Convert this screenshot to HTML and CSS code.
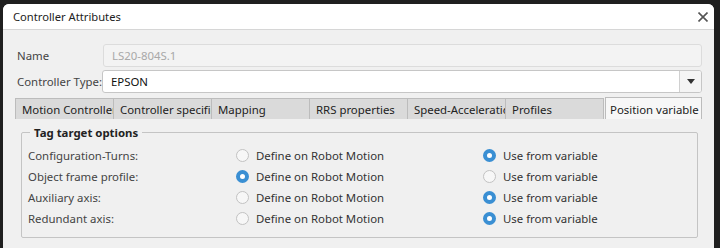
FILE: index.html
```html
<!DOCTYPE html>
<html lang="en">
<head>
  <meta charset="UTF-8">
  <title>Controller Attributes</title>
  <link rel="stylesheet" href="styles.css">
</head>
<body>
  <div class="dialog">
    <div class="titlebar">
      <span class="title">Controller Attributes</span>
      <svg class="close" width="10" height="10" viewBox="0 0 10 10">
        <path d="M0.5 0.5 L9.5 9.5 M9.5 0.5 L0.5 9.5" stroke="#555" stroke-width="1.6"/>
      </svg>
    </div>

    <div class="content">
      <div class="form-row">
        <label class="field-label">Name</label>
        <div class="input disabled">LS20-804S.1</div>
      </div>
      <div class="form-row">
        <label class="field-label">Controller Type:</label>
        <div class="input select">
          <span class="select-value">EPSON</span>
          <span class="select-btn">
            <svg width="8" height="5" viewBox="0 0 8 5"><path d="M0 0 H8 L4 5 Z" fill="#333"/></svg>
          </span>
        </div>
      </div>

      <div class="tabs">
        <div class="tab">Motion Controller</div>
        <div class="tab">Controller specific</div>
        <div class="tab">Mapping</div>
        <div class="tab">RRS properties</div>
        <div class="tab">Speed-Acceleration</div>
        <div class="tab">Profiles</div>
        <div class="tab active">Position variable</div>
      </div>

      <div class="tab-panel">
        <fieldset class="group">
          <legend>Tag target options</legend>
          <div class="option-row">
            <span class="opt-label">Configuration-Turns:</span>
            <span class="radio-item"><span class="radio"></span>Define on Robot Motion</span>
            <span class="radio-item"><span class="radio checked"></span>Use from variable</span>
          </div>
          <div class="option-row">
            <span class="opt-label">Object frame profile:</span>
            <span class="radio-item"><span class="radio checked"></span>Define on Robot Motion</span>
            <span class="radio-item"><span class="radio"></span>Use from variable</span>
          </div>
          <div class="option-row">
            <span class="opt-label">Auxiliary axis:</span>
            <span class="radio-item"><span class="radio"></span>Define on Robot Motion</span>
            <span class="radio-item"><span class="radio checked"></span>Use from variable</span>
          </div>
          <div class="option-row">
            <span class="opt-label">Redundant axis:</span>
            <span class="radio-item"><span class="radio"></span>Define on Robot Motion</span>
            <span class="radio-item"><span class="radio checked"></span>Use from variable</span>
          </div>
        </fieldset>
      </div>
    </div>
  </div>
</body>
</html>
```

FILE: styles.css
```css
* {
  box-sizing: border-box;
  margin: 0;
  padding: 0;
}

html, body {
  height: 100%;
}

body {
  background: #1f1f1f;
  font-family: 'Noto Sans', 'Open Sans', sans-serif;
  font-size: 11.4px;
  color: #333;
  overflow: hidden;
}

.dialog {
  margin: 4px 0 0 3px;
  width: 711px;
  height: calc(100% - 4px);
  background: #f0f0f0;
  border-radius: 6px 6px 0 0;
  overflow: hidden;
}

.titlebar {
  height: 26px;
  background: #fff;
  border-bottom: 1px solid #d6d6d6;
  display: flex;
  align-items: center;
  justify-content: space-between;
  padding: 0 6px 0 10px;
  font-size: 11.2px;
}

.title {
  color: #222;
}

.close {
  display: block;
}

.content {
  padding: 14px 12px 0 12px;
}

.form-row {
  display: grid;
  grid-template-columns: 87px 1fr;
  align-items: center;
  height: 23px;
  margin-bottom: 3px;
}

.field-label {
  padding-left: 2px;
  color: #444;
  white-space: nowrap;
}

.input {
  height: 23px;
  border: 1px solid #c6c6c6;
  border-radius: 3px;
  background: #fff;
  display: flex;
  align-items: center;
  padding-left: 8px;
  color: #111;
}

.input.disabled {
  background: #f3f3f3;
  border-color: #dcdcdc;
  color: #a8a8a8;
  margin-left: 1px;
}

.select {
  padding-left: 0;
  overflow: hidden;
}

.select-value {
  flex: 1;
  padding-left: 8px;
}

.select-btn {
  width: 22px;
  height: 100%;
  border-left: 1px solid #d0d0d0;
  display: flex;
  align-items: center;
  justify-content: center;
  background: #f4f4f4;
}

.select-btn svg {
  display: block;
}

.tabs {
  display: flex;
  margin-top: 5px;
  height: 21px;
}

.tab {
  width: 99px;
  height: 21px;
  background: #dadada;
  border: 1px solid #bcbcbc;
  border-bottom: none;
  padding: 3px 0 0 6px;
  white-space: nowrap;
  overflow: hidden;
  color: #222;
}

.tab + .tab {
  margin-left: -1px;
}

.tab.active {
  margin-left: 1px;
  width: 97px;
  background: #f7f7f7;
  height: 22px;
  margin-top: -1px;
  padding: 4px 0 0 4px;
}

.tab-panel {
  padding: 6px 4px 0 6px;
}

.group {
  border: 1px solid #c4c4c4;
  border-radius: 2px;
  width: 677px;
  height: 113px;
  padding: 5px 0 0 6px;
}

.group legend {
  font-weight: bold;
  margin-left: 2px;
  padding: 0 4px;
  color: #222;
}

.option-row {
  display: grid;
  grid-template-columns: 208px 247px 1fr;
  align-items: center;
  height: 21px;
}

.opt-label {
  color: #444;
}

.radio-item {
  display: flex;
  align-items: center;
  gap: 7px;
  color: #333;
}

.radio {
  width: 13px;
  height: 13px;
  border-radius: 50%;
  border: 1px solid #c2c2c2;
  background: #f7f7f7;
  flex-shrink: 0;
}

.radio.checked {
  border: 4px solid #3a8fd3;
  background: #fff;
}
```
